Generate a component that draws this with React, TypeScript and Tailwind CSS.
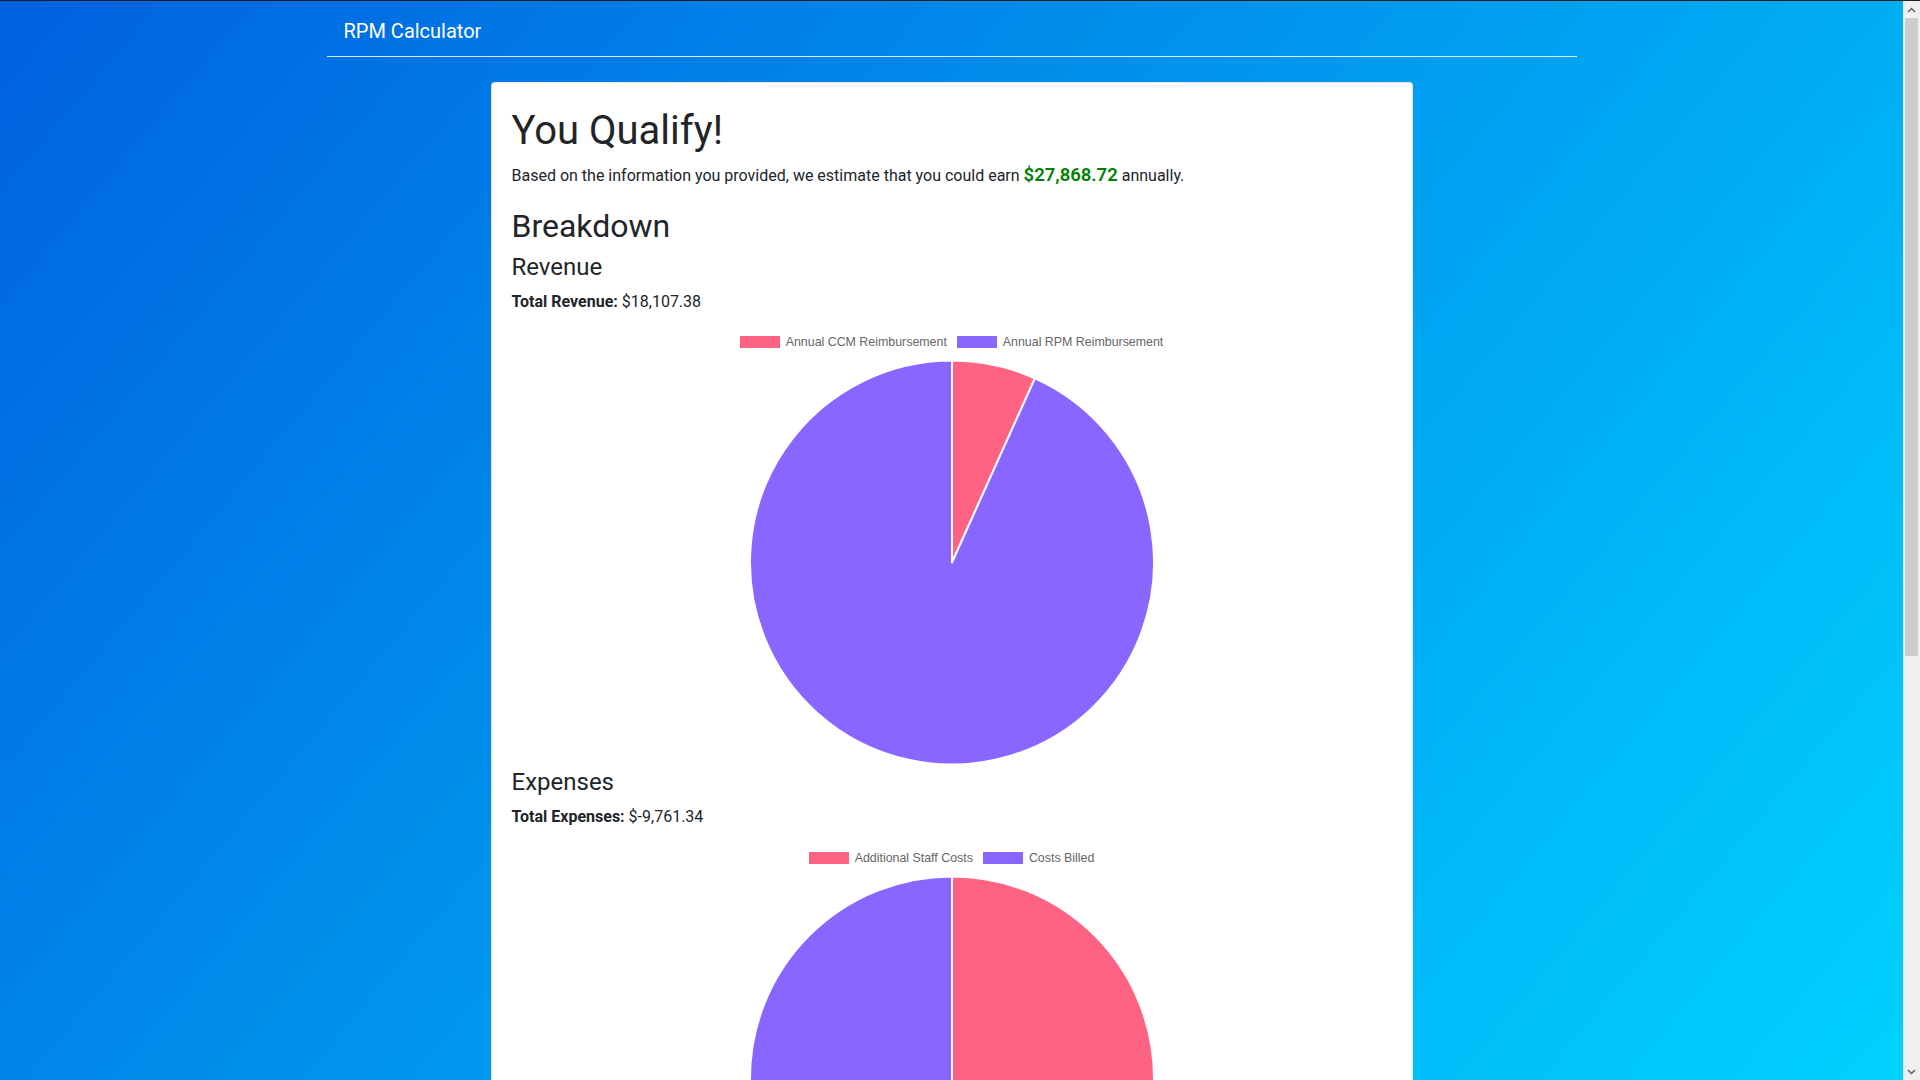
import React from 'react';

type Slice = { label: string; value: number; color: string };

const revenue: Slice[] = [
  { label: 'Annual CCM Reimbursement', value: 1218.9, color: '#ff6384' },
  { label: 'Annual RPM Reimbursement', value: 16888.48, color: '#8866ff' },
];

const expenses: Slice[] = [
  { label: 'Additional Staff Costs', value: 4880.67, color: '#ff6384' },
  { label: 'Costs Billed', value: 4880.67, color: '#8866ff' },
];

// pie slices start at 12 o'clock and go clockwise, like chart.js
function slicePath(cx: number, cy: number, r: number, a0: number, a1: number) {
  const x0 = cx + r * Math.sin(a0);
  const y0 = cy - r * Math.cos(a0);
  const x1 = cx + r * Math.sin(a1);
  const y1 = cy - r * Math.cos(a1);
  const large = a1 - a0 > Math.PI ? 1 : 0;
  return `M${cx} ${cy} L${x0} ${y0} A${r} ${r} 0 ${large} 1 ${x1} ${y1} Z`;
}

function PieChart({ data }: { data: Slice[] }) {
  const total = data.reduce((s, d) => s + d.value, 0);
  let angle = 0;
  const cx = 440;
  const cy = 204.5;
  const r = 202;

  return (
    <div className="flex h-[442px] flex-col">
      {/* Legend */}
      <div className="flex h-[32px] items-center justify-center gap-[10px] font-['Liberation_Sans',Arial,sans-serif] text-[12.4px] text-[#666666]">
        {data.map((d) => (
          <div key={d.label} className="flex items-center gap-[6px]">
            <span className="block h-[12px] w-[40px]" style={{ backgroundColor: d.color }} />
            <span>{d.label}</span>
          </div>
        ))}
      </div>

      {/* Pie */}
      <svg width="880" height="409" viewBox="0 0 880 409" className="block">
        {data.map((d) => {
          const a0 = angle;
          const a1 = angle + (d.value / total) * Math.PI * 2;
          angle = a1;
          return (
            <path
              key={d.label}
              d={slicePath(cx, cy, r, a0, a1)}
              fill={d.color}
              stroke="#ffffff"
              strokeWidth={2}
              strokeLinejoin="round"
            />
          );
        })}
      </svg>
    </div>
  );
}

function Scrollbar() {
  return (
    <div className="flex h-full w-[17px] shrink-0 flex-col bg-[#f0f0f0]">
      <div className="flex h-[17px] items-center justify-center">
        <svg width="9" height="6" viewBox="0 0 9 6">
          <path d="M1 5 L4.5 1.5 L8 5" fill="none" stroke="#606060" strokeWidth="1.5" />
        </svg>
      </div>
      <div className="flex-1 px-[2px]">
        <div className="h-[638px] bg-[#cdcdcd]" />
      </div>
      <div className="flex h-[17px] items-center justify-center">
        <svg width="9" height="6" viewBox="0 0 9 6">
          <path d="M1 1 L4.5 4.5 L8 1" fill="none" stroke="#606060" strokeWidth="1.5" />
        </svg>
      </div>
    </div>
  );
}

export default function App() {
  return (
    <div className="flex h-screen overflow-hidden border-t border-[#1f1f1f] font-['Roboto','Noto_Sans',sans-serif] text-[#212529]">
      <div className="h-full flex-1 overflow-hidden bg-[linear-gradient(130deg,#0061df,#00d2ff)]">
        {/* Navbar */}
        <div className="mx-auto w-[1250px] border-b border-white/85 px-[17px] pt-[15px] pb-[10px]">
          <span className="text-[20px] leading-[30px] text-white">RPM Calculator</span>
        </div>

        {/* Results card */}
        <div className="mx-auto mt-[25px] w-[922px] rounded-[4px] border border-black/10 bg-white px-5 pt-[24px] pb-5">
          <h1 className="mb-[8px] text-[40px] leading-[48px] font-normal">You Qualify!</h1>
          <p className="mb-[19px] text-[16px] leading-[24px]">
            Based on the information you provided, we estimate that you could earn{' '}
            <span className="text-[18.5px] font-semibold text-[#008000]">$27,868.72</span> annually.
          </p>

          <h2 className="mb-2 text-[32px] leading-[38px] font-normal">Breakdown</h2>

          <h4 className="mb-2 text-[24px] leading-[29px] font-normal">Revenue</h4>
          <p className="mb-[12px] text-[16px] leading-[24px]">
            <span className="font-bold">Total Revenue:</span> $18,107.38
          </p>
          <PieChart data={revenue} />

          <h4 className="mb-2 text-[24px] leading-[29px] font-normal">Expenses</h4>
          <p className="mb-[13px] text-[16px] leading-[24px]">
            <span className="font-bold">Total Expenses:</span> $-9,761.34
          </p>
          <PieChart data={expenses} />
        </div>
      </div>
      <Scrollbar />
    </div>
  );
}
